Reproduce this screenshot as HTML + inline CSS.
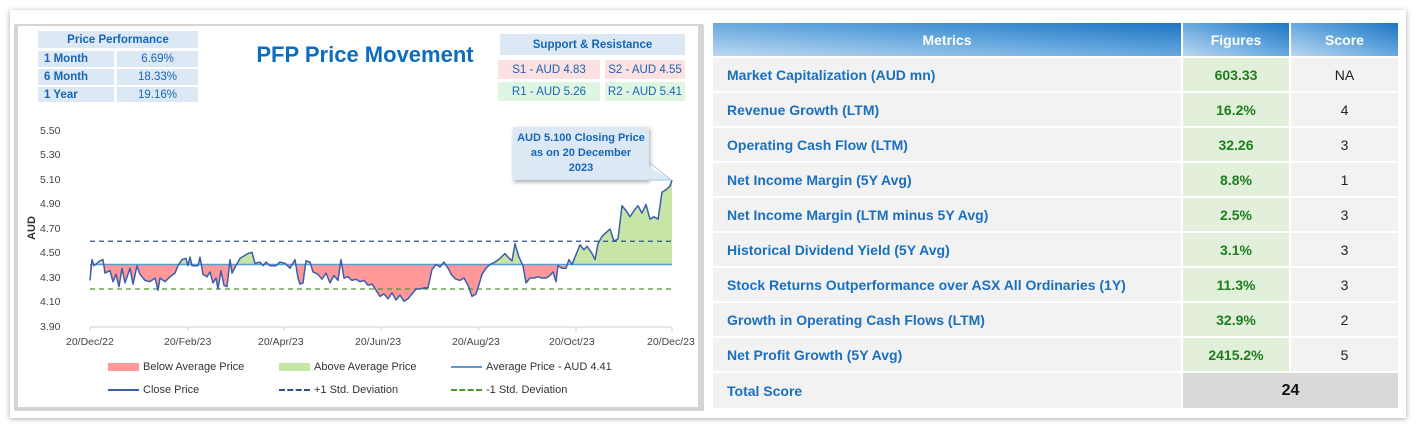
<!DOCTYPE html>
<html><head><meta charset="utf-8"><style>
*{margin:0;padding:0;box-sizing:border-box}
body{width:1416px;height:429px;background:#fff;font-family:"Liberation Sans",sans-serif;position:relative;overflow:hidden}
.card{position:absolute;left:10px;top:10px;width:1396px;height:408px;background:#fff;box-shadow:0 1px 5px rgba(0,0,0,.35)}
.panel{position:absolute;left:14px;top:24px;width:690px;height:387px;background:#d4d4d4;border-radius:2px}
.inner{position:absolute;left:18px;top:26px;width:680px;height:381px;background:#fff}
.a{position:absolute}
.pp{background:#dce9f5;color:#1565b8;font-size:11.5px;font-weight:bold;display:flex;align-items:center}
.sr{font-size:11.5px;color:#1565b8;display:flex;align-items:center;justify-content:center}
.ax{position:absolute;font-size:10.5px;color:#444}
table{position:absolute;left:713px;top:23px;border-collapse:separate;border-spacing:0}
td{height:35px;border-bottom:2px solid #fff;font-size:14px;font-weight:bold;padding:0}
.m{width:470px;background:#f2f2f2;color:#1a6fbf;padding-left:14px;border-right:2px solid #fff}
.f{width:108px;background:#e2efda;color:#1e7d1e;text-align:center;border-right:2px solid #fff}
.s{width:107px;background:#f2f2f2;color:#222;text-align:center;font-weight:normal}
th{height:35px;color:#fff;font-size:14px;font-weight:bold;background:linear-gradient(to top right,#bcd8f0,#5fa3dc 55%,#1c74c4);border-bottom:2px solid #fff}
.leg{position:absolute;font-size:11px;color:#333;display:flex;align-items:center}
</style></head><body>
<div class="card"></div>
<div class="panel"></div>
<div class="inner"></div>

<div class="a pp" style="left:38px;top:31px;width:160px;height:17px;justify-content:center">Price Performance</div>
<div class="a pp" style="left:38px;top:51px;width:76px;height:16px;padding-left:6px">1 Month</div>
<div class="a pp" style="left:117px;top:51px;width:81px;height:16px;justify-content:center;font-weight:normal">6.69%</div>
<div class="a pp" style="left:38px;top:69px;width:76px;height:16px;padding-left:6px">6 Month</div>
<div class="a pp" style="left:117px;top:69px;width:81px;height:16px;justify-content:center;font-weight:normal">18.33%</div>
<div class="a pp" style="left:38px;top:87px;width:76px;height:15px;padding-left:6px">1 Year</div>
<div class="a pp" style="left:117px;top:87px;width:81px;height:15px;justify-content:center;font-weight:normal">19.16%</div>

<div class="a" style="left:230px;top:42px;width:270px;text-align:center;font-size:22px;font-weight:bold;color:#0b6dc0">PFP Price Movement</div>

<div class="a sr" style="left:500px;top:34px;width:185px;height:21px;background:#dce9f5;font-weight:bold">Support &amp; Resistance</div>
<div class="a sr" style="left:498px;top:60px;width:102px;height:19px;background:#fde0e0">S1 - AUD 4.83</div>
<div class="a sr" style="left:605px;top:60px;width:80px;height:19px;background:#fde0e0">S2 - AUD 4.55</div>
<div class="a sr" style="left:498px;top:82px;width:102px;height:19px;background:#dff7e2">R1 - AUD 5.26</div>
<div class="a sr" style="left:605px;top:82px;width:80px;height:19px;background:#dff7e2">R2 - AUD 5.41</div>

<div class="ax" style="left:40px;top:125px">5.50</div>
<div class="ax" style="left:40px;top:149px">5.30</div>
<div class="ax" style="left:40px;top:174px">5.10</div>
<div class="ax" style="left:40px;top:198px">4.90</div>
<div class="ax" style="left:40px;top:223px">4.70</div>
<div class="ax" style="left:40px;top:247px">4.50</div>
<div class="ax" style="left:40px;top:272px">4.30</div>
<div class="ax" style="left:40px;top:296px">4.10</div>
<div class="ax" style="left:40px;top:321px">3.90</div>
<div class="a" style="left:20px;top:222px;transform:rotate(-90deg);font-size:11px;font-weight:bold;color:#333">AUD</div>
<div class="ax" style="left:66px;top:336px">20/Dec/22</div>
<div class="ax" style="left:164px;top:336px">20/Feb/23</div>
<div class="ax" style="left:258px;top:336px">20/Apr/23</div>
<div class="ax" style="left:355px;top:336px">20/Jun/23</div>
<div class="ax" style="left:452px;top:336px">20/Aug/23</div>
<div class="ax" style="left:549px;top:336px">20/Oct/23</div>
<div class="ax" style="left:647px;top:336px">20/Dec/23</div>

<svg id="ch" class="a" style="left:0;top:0" width="710" height="429"></svg>

<div class="a" style="left:513px;top:127px;width:136px;height:53px;background:#dce9f5;box-shadow:1px 2px 4px rgba(0,0,0,.35);color:#1565b8;font-size:11px;font-weight:bold;text-align:center;line-height:15px;padding-top:4px">AUD 5.100 Closing Price<br>as on 20 December<br>2023</div>
<svg class="a" style="left:640px;top:150px" width="40" height="40"><polygon points="2,12 10,30 31,30" fill="#dce9f5"/><polyline points="9,12 31,30 10,30" fill="none" stroke="#a8c4dc" stroke-width="1"/></svg>

<div class="leg" style="left:108px;top:361px"><span style="display:inline-block;width:31px;height:8px;background:#f99;margin-right:4px"></span>Below Average Price</div>
<div class="leg" style="left:279px;top:361px"><span style="display:inline-block;width:31px;height:8px;background:#c6e5a6;margin-right:4px"></span>Above Average Price</div>
<div class="leg" style="left:451px;top:361px"><span style="display:inline-block;width:31px;height:2px;background:#5b9bd5;margin-right:4px"></span>Average Price - AUD 4.41</div>
<div class="leg" style="left:108px;top:384px"><span style="display:inline-block;width:31px;height:2px;background:#3a5eab;margin-right:4px"></span>Close Price</div>
<div class="leg" style="left:279px;top:384px"><span style="display:inline-block;width:31px;border-top:2px dashed #2f4f8f;margin-right:4px"></span>+1 Std. Deviation</div>
<div class="leg" style="left:451px;top:384px"><span style="display:inline-block;width:31px;border-top:2px dashed #4a9a2a;margin-right:4px"></span>-1 Std. Deviation</div>

<table>
<tr><th style="width:470px;border-right:2px solid #fff">Metrics</th><th style="width:108px;border-right:2px solid #fff">Figures</th><th style="width:107px">Score</th></tr>
<tr><td class="m">Market Capitalization (AUD mn)</td><td class="f">603.33</td><td class="s">NA</td></tr>
<tr><td class="m">Revenue Growth (LTM)</td><td class="f">16.2%</td><td class="s">4</td></tr>
<tr><td class="m">Operating Cash Flow (LTM)</td><td class="f">32.26</td><td class="s">3</td></tr>
<tr><td class="m">Net Income Margin (5Y Avg)</td><td class="f">8.8%</td><td class="s">1</td></tr>
<tr><td class="m">Net Income Margin (LTM minus 5Y Avg)</td><td class="f">2.5%</td><td class="s">3</td></tr>
<tr><td class="m">Historical Dividend Yield (5Y Avg)</td><td class="f">3.1%</td><td class="s">3</td></tr>
<tr><td class="m">Stock Returns Outperformance over ASX All Ordinaries (1Y)</td><td class="f">11.3%</td><td class="s">3</td></tr>
<tr><td class="m">Growth in Operating Cash Flows (LTM)</td><td class="f">32.9%</td><td class="s">2</td></tr>
<tr><td class="m">Net Profit Growth (5Y Avg)</td><td class="f">2415.2%</td><td class="s">5</td></tr>
<tr><td class="m" style="border-bottom:0">Total Score</td><td colspan="2" style="background:#d9d9d9;text-align:center;font-size:16px;color:#111;border-bottom:0">24</td></tr>
</table>

<script>
var d=[90,4.28,92,4.45,94,4.40,100,4.44,103,4.45,105,4.34,110,4.36,113,4.27,116,4.33,119,4.23,122,4.38,125,4.26,130,4.38,133,4.25,137,4.40,140,4.33,145,4.28,150,4.27,155,4.30,158,4.20,160,4.30,165,4.27,170,4.31,175,4.34,178,4.40,182,4.45,186,4.46,188,4.40,190,4.47,192,4.40,198,4.40,200,4.47,203,4.33,207,4.31,210,4.35,213,4.26,216,4.30,218,4.21,221,4.36,224,4.24,227,4.23,230,4.45,232,4.34,236,4.40,240,4.46,244,4.48,248,4.50,252,4.51,255,4.42,260,4.43,263,4.40,266,4.43,270,4.40,276,4.40,280,4.43,285,4.42,290,4.38,295,4.45,298,4.30,300,4.25,303,4.26,306,4.44,310,4.43,313,4.35,318,4.33,322,4.29,326,4.34,330,4.26,334,4.32,338,4.28,341,4.45,344,4.30,348,4.31,352,4.28,356,4.29,360,4.27,364,4.28,368,4.24,372,4.25,376,4.20,380,4.15,384,4.17,388,4.13,392,4.18,396,4.12,400,4.16,404,4.11,408,4.13,412,4.17,416,4.21,420,4.21,424,4.22,428,4.22,432,4.37,436,4.41,440,4.39,444,4.43,448,4.38,452,4.32,456,4.29,460,4.28,464,4.30,468,4.24,472,4.15,476,4.17,478,4.22,482,4.33,486,4.38,490,4.41,495,4.43,500,4.46,505,4.50,508,4.47,512,4.44,515,4.58,519,4.47,523,4.40,526,4.26,530,4.30,534,4.30,538,4.31,542,4.30,546,4.30,550,4.32,553,4.35,556,4.27,558,4.40,562,4.38,566,4.38,569,4.45,572,4.41,576,4.49,580,4.57,584,4.53,587,4.56,592,4.50,595,4.45,598,4.58,602,4.64,606,4.67,610,4.70,614,4.60,618,4.62,622,4.89,626,4.85,630,4.80,634,4.85,638,4.89,642,4.83,646,4.90,650,4.78,654,4.80,658,4.78,662,5.00,666,5.02,670,5.05,672,5.10];
function Y(v){return 327-(v-3.9)*122.5}
var pts=[];for(var i=0;i<d.length;i+=2)pts.push(d[i]+","+Y(d[i+1]).toFixed(1));
var avg=Y(4.41).toFixed(1);
var poly="90,"+avg+" "+pts.join(" ")+" 672,"+avg;
var s='<defs><clipPath id="up"><rect x="80" y="100" width="600" height="'+(avg-100)+'"/></clipPath><clipPath id="dn"><rect x="80" y="'+avg+'" width="600" height="100"/></clipPath></defs>';
s+='<polygon points="'+poly+'" fill="#c6e5a6" clip-path="url(#up)"/>';
s+='<polygon points="'+poly+'" fill="#f99" clip-path="url(#dn)"/>';
s+='<line x1="90" y1="327" x2="672" y2="327" stroke="#d0d0d0"/>';
[90,188,284,381,479,576,672].forEach(function(x){s+='<line x1="'+x+'" y1="327" x2="'+x+'" y2="331" stroke="#d0d0d0"/>'});
s+='<line x1="90" y1="'+Y(4.6)+'" x2="672" y2="'+Y(4.6)+'" stroke="#2f4f8f" stroke-width="1.3" stroke-dasharray="5,4"/>';
s+='<line x1="90" y1="'+Y(4.21)+'" x2="672" y2="'+Y(4.21)+'" stroke="#4a9a2a" stroke-width="1.3" stroke-dasharray="5,4"/>';
s+='<line x1="90" y1="'+avg+'" x2="672" y2="'+avg+'" stroke="#5b9bd5" stroke-width="1.5"/>';
s+='<polyline points="'+pts.join(" ")+'" fill="none" stroke="#3a5eab" stroke-width="1.5" stroke-linejoin="round"/>';
document.getElementById("ch").innerHTML=s;
</script>
</body></html>
